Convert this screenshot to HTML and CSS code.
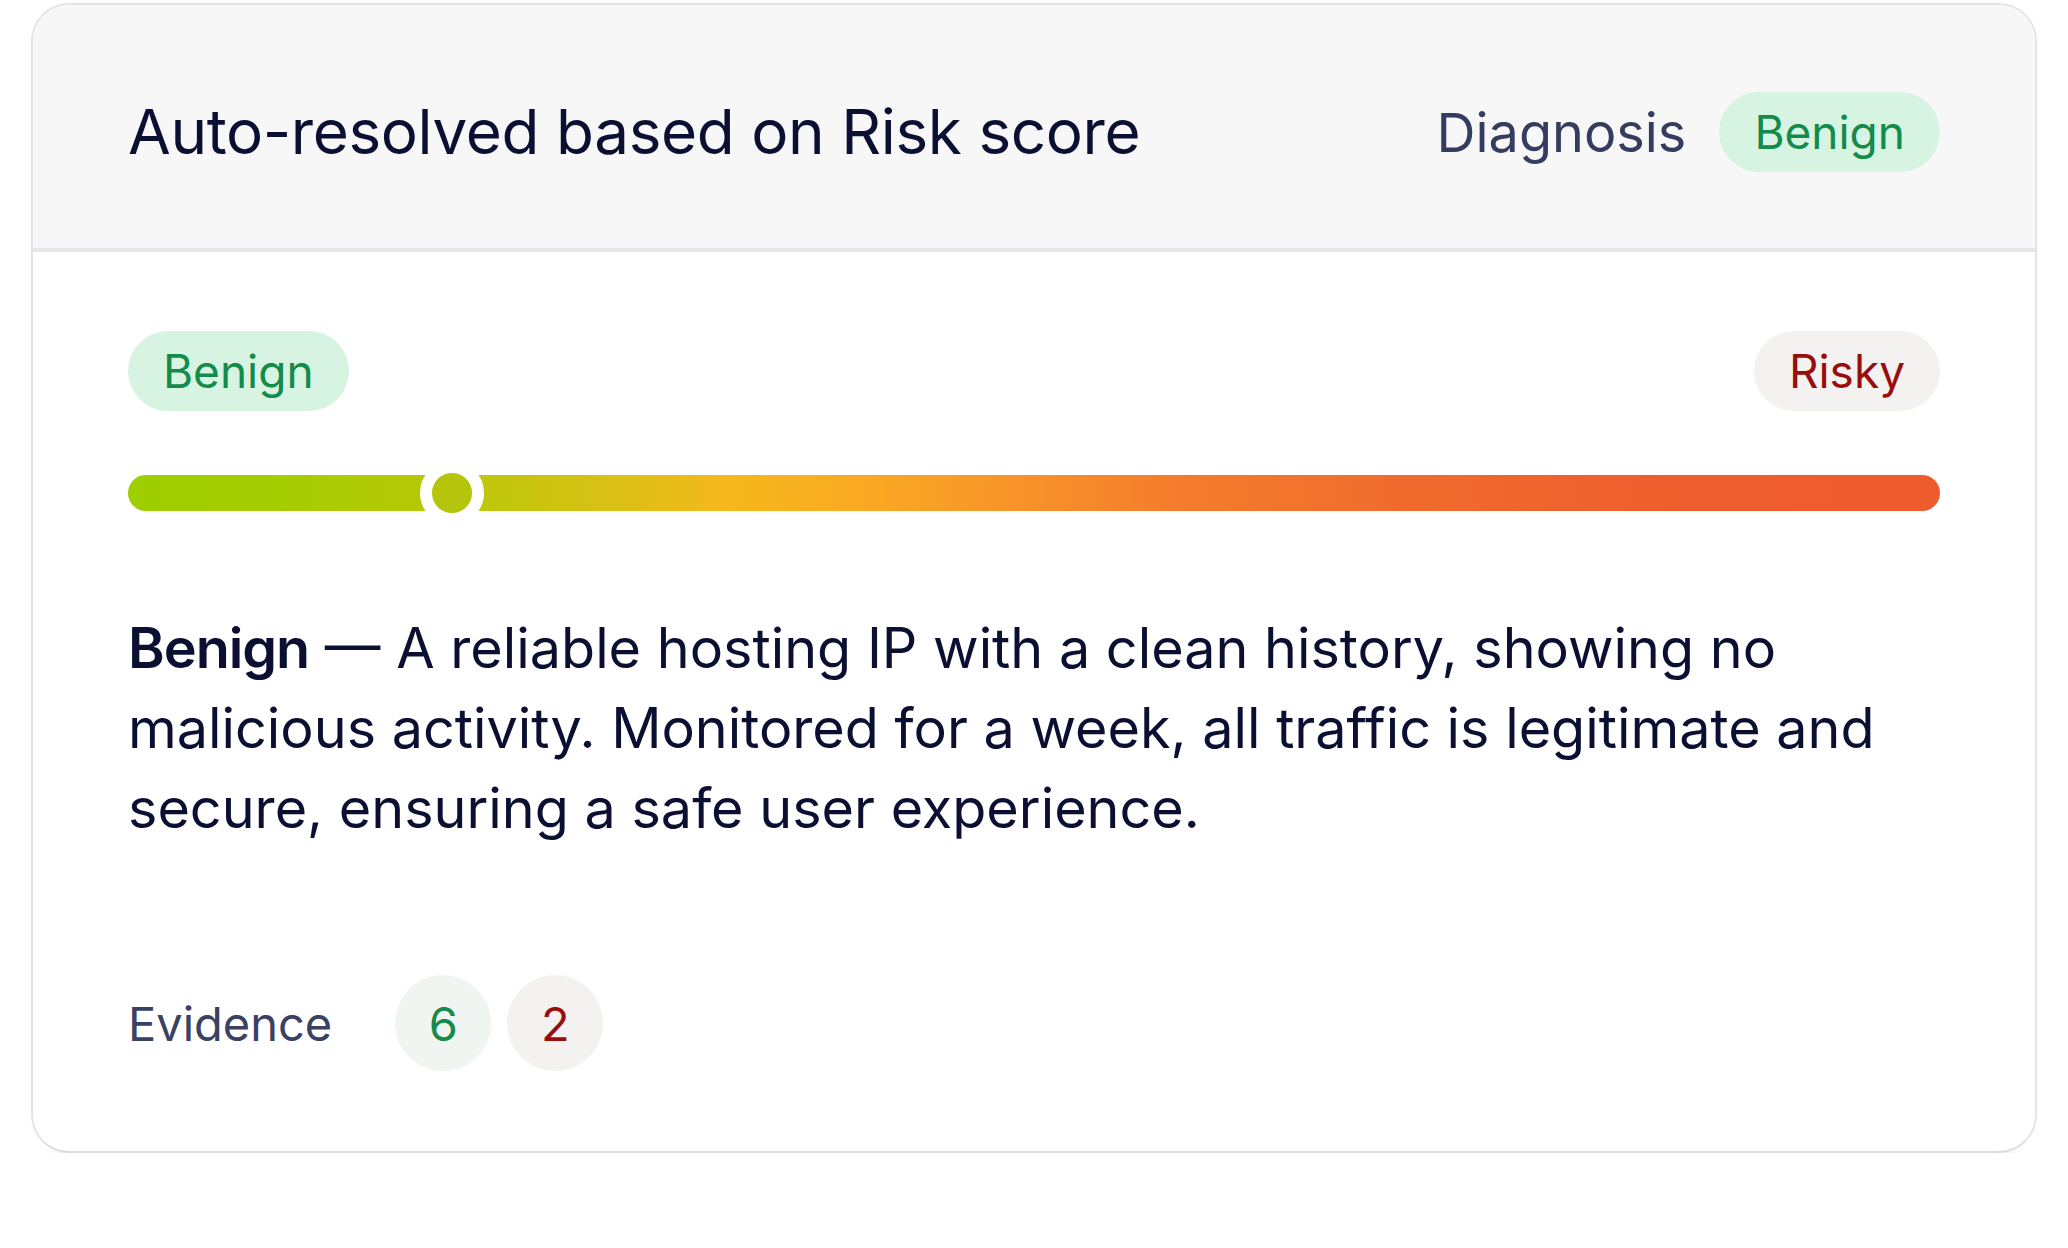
FILE: index.html
```html
<!DOCTYPE html>
<html lang="en">
<head>
<meta charset="utf-8">
<title>Risk score</title>
<link rel="stylesheet" href="styles.css">
</head>
<body>
<div class="card-wrap">
<div class="card">
  <div class="card-header">
    <h1 class="title">Auto-resolved based on Risk score</h1>
    <div class="diagnosis">
      <span class="diag-label">Diagnosis</span>
      <span class="pill pill-benign">Benign</span>
    </div>
  </div>
  <div class="card-body">
    <div class="scale-labels">
      <span class="pill pill-benign">Benign</span>
      <span class="pill pill-risky">Risky</span>
    </div>
    <div class="bar">
      <span class="knob" style="left: 17.9%"></span>
    </div>
    <p class="desc"><strong>Benign</strong> — A reliable hosting IP with a clean history, showing no malicious activity. Monitored for a week, all traffic is legitimate and secure, ensuring a safe user experience.</p>
    <div class="evidence">
      <span class="evidence-label">Evidence</span>
      <div class="counts">
        <span class="count count-good">6</span>
        <span class="count count-bad">2</span>
      </div>
    </div>
  </div>
</div>
</div>
</body>
</html>
```

FILE: styles.css
```css
* { box-sizing: border-box; }

html, body {
  background: #ffffff;
}

body {
  margin: 3px 31px;
  font-family: Inter, "Noto Sans", sans-serif;
  color: #0b1033;
}

.card-wrap {
  position: relative;
}

.card-wrap::after {
  content: "";
  position: absolute;
  left: 22px;
  right: 22px;
  top: calc(100% - 30px);
  height: 72px;
  border-radius: 0 0 60px 60px;
  background: linear-gradient(180deg, #ededed 0%, #f0f0f0 55%, rgba(255, 255, 255, 0) 100%);
  filter: blur(6px);
  z-index: 0;
}

.card {
  position: relative;
  z-index: 1;
  background: #ffffff;
  border: 2px solid #e4e4e7;
  border-bottom-color: #dcdcde;
  border-radius: 38px;
  overflow: hidden;
}

.card-header {
  display: flex;
  align-items: center;
  justify-content: space-between;
  background: #f7f7f8;
  padding: 87px 95px 76px;
  border-bottom: 4px solid #e6e6eb;
}

.title {
  margin: 0;
  font-size: 62px;
  font-weight: 400;
  letter-spacing: -0.4px;
  line-height: 80px;
  color: #0b1033;
}

.diagnosis {
  display: flex;
  align-items: center;
  gap: 33px;
}

.diag-label {
  font-size: 54px;
  color: #353c5f;
}

.pill {
  display: inline-flex;
  align-items: center;
  justify-content: center;
  height: 80px;
  padding: 0 35px;
  border-radius: 40px;
  font-size: 46px;
  line-height: 1;
}

.pill-benign {
  background: #d7f3e2;
  color: #128b4b;
}

.pill-risky {
  background: #f3f2f1;
  color: #990d0d;
}

.card-body {
  padding: 79px 95px 80px;
}

.scale-labels {
  display: flex;
  justify-content: space-between;
  align-items: center;
}

.bar {
  position: relative;
  margin-top: 64px;
  height: 36px;
  border-radius: 18px;
  background: linear-gradient(90deg,
    #9ecf00 0%,
    #a8cc03 10%,
    #bcc70b 19%,
    #d6c114 26%,
    #f5b81c 33%,
    #faa823 41%,
    #f7942a 49%,
    #f47c2c 58%,
    #f06c2d 70%,
    #ee5e2d 85%,
    #ee5b2d 100%);
}

.knob {
  position: absolute;
  top: 50%;
  width: 64px;
  height: 64px;
  margin-left: -32px;
  margin-top: -32px;
  border-radius: 50%;
  background: #b5c50b;
  border: 12px solid #ffffff;
}

.desc {
  margin: 97px 0 0;
  font-size: 55.7px;
  line-height: 80px;
  color: #0b1033;
}

.desc strong {
  font-weight: 600;
  letter-spacing: -1px;
}

.evidence {
  display: flex;
  align-items: center;
  margin-top: 127px;
  gap: 63px;
}

.evidence-label {
  font-size: 47px;
  color: #3a4163;
}

.counts {
  display: flex;
  gap: 16px;
}

.count {
  display: flex;
  align-items: center;
  justify-content: center;
  width: 96px;
  height: 96px;
  border-radius: 50%;
  font-size: 47px;
}

.count-good {
  background: #f0f5f1;
  color: #128b4b;
}

.count-bad {
  background: #f3f2f1;
  color: #990d0d;
}
```
